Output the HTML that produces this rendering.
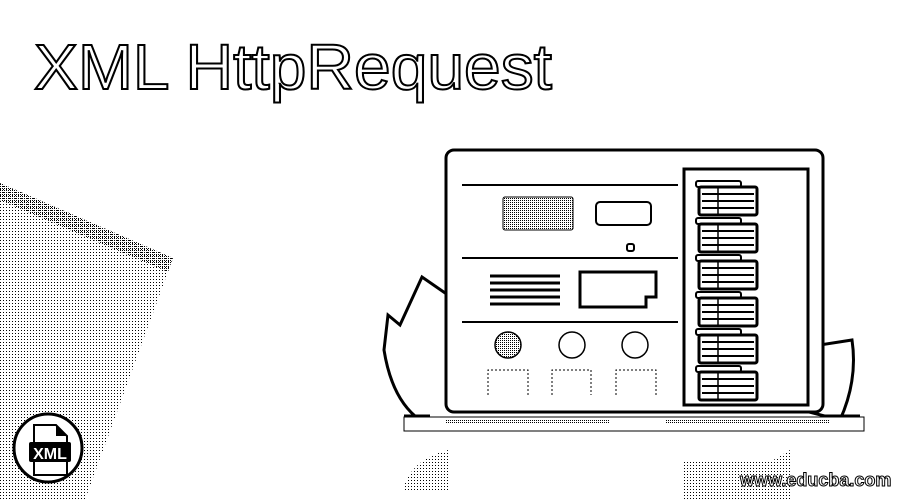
<!DOCTYPE html>
<html><head><style>
html,body{margin:0;padding:0;background:#fff;width:900px;height:500px;overflow:hidden}
svg{display:block}
</style></head><body>
<svg width="900" height="500" viewBox="0 0 900 500" xmlns="http://www.w3.org/2000/svg">
<defs>
<pattern id="dot" width="3" height="3" patternUnits="userSpaceOnUse"><rect width="1" height="1" fill="#000"/></pattern>
<pattern id="dot2" width="2" height="2" patternUnits="userSpaceOnUse"><rect width="1" height="1" fill="#000"/></pattern>
<g id="item">
<rect x="0" y="0" width="45" height="6" rx="2" fill="#fff" stroke="#000" stroke-width="2"/>
<rect x="3" y="6" width="58" height="28" rx="2" fill="#fff" stroke="#000" stroke-width="3"/>
<line x1="6" y1="13" x2="58" y2="13" stroke="#000" stroke-width="2"/>
<line x1="6" y1="20" x2="58" y2="20" stroke="#000" stroke-width="2"/>
<line x1="6" y1="27" x2="58" y2="27" stroke="#000" stroke-width="2"/>
<line x1="22" y1="6" x2="22" y2="34" stroke="#000" stroke-width="1.5"/>
</g>
</defs>
<rect width="900" height="500" fill="#fff"/>
<polygon points="0,183 173,258 85,500 0,500" fill="url(#dot)"/>
<polygon points="0,183 173,258 168,272 0,200" fill="url(#dot2)"/>
<text x="34" y="89" font-family="Liberation Sans, sans-serif" font-size="64" fill="#fff" stroke="#000" stroke-width="2" textLength="518" lengthAdjust="spacingAndGlyphs">XML HttpRequest</text>
<path d="M448,295 L422,277 L400,325 L388,315 L384,350 Q392,400 420,420 L470,420" fill="#fff" stroke="#000" stroke-width="3"/>
<path d="M808,305 L790,318 Q770,360 782,405 L840,420 Q858,380 852,340 L820,345 Z" fill="#fff" stroke="#000" stroke-width="3"/>
<rect x="446" y="150" width="377" height="262" rx="8" fill="#fff" stroke="#000" stroke-width="3"/>
<line x1="462" y1="185" x2="678" y2="185" stroke="#000" stroke-width="2"/>
<line x1="462" y1="258" x2="678" y2="258" stroke="#000" stroke-width="2"/>
<line x1="462" y1="322" x2="678" y2="322" stroke="#000" stroke-width="2"/>
<rect x="503" y="197" width="70" height="33" rx="2" fill="url(#dot2)" stroke="#000" stroke-width="1"/>
<rect x="596" y="202" width="55" height="23" rx="4" fill="#fff" stroke="#000" stroke-width="2"/>
<rect x="627" y="244" width="7" height="7" rx="2" fill="#fff" stroke="#000" stroke-width="2"/>
<g stroke="#000" stroke-width="3"><line x1="490" y1="276" x2="560" y2="276"/><line x1="490" y1="283" x2="560" y2="283"/><line x1="490" y1="290" x2="560" y2="290"/><line x1="490" y1="297" x2="560" y2="297"/><line x1="490" y1="304" x2="560" y2="304"/></g>
<path d="M580,272 L656,272 L656,297 L646,297 L646,307 L580,307 Z" fill="#fff" stroke="#000" stroke-width="3"/>
<circle cx="508" cy="345" r="13" fill="url(#dot2)" stroke="#000" stroke-width="1.5"/>
<circle cx="572" cy="345" r="13" fill="#fff" stroke="#000" stroke-width="1.5"/>
<circle cx="635" cy="345" r="13" fill="#fff" stroke="#000" stroke-width="1.5"/>
<g fill="none" stroke="#000" stroke-width="1" stroke-dasharray="2,2"><path d="M488,395 V370 H528 V395"/><path d="M552,395 V370 H591 V395"/><path d="M616,395 V370 H656 V395"/></g>
<rect x="684" y="169" width="124" height="236" fill="#fff" stroke="#000" stroke-width="3"/>
<use href="#item" x="696" y="181"/>
<use href="#item" x="696" y="218"/>
<use href="#item" x="696" y="255"/>
<use href="#item" x="696" y="292"/>
<use href="#item" x="696" y="329"/>
<use href="#item" x="696" y="366"/>
<rect x="404" y="417" width="460" height="14" fill="#fff" stroke="#000" stroke-width="1"/>
<rect x="445" y="419" width="165" height="4" fill="url(#dot2)"/>
<rect x="665" y="419" width="165" height="4" fill="url(#dot2)"/>
<line x1="404" y1="416" x2="430" y2="416" stroke="#000" stroke-width="3"/>
<line x1="825" y1="416" x2="860" y2="416" stroke="#000" stroke-width="3"/>
<path d="M403,490 Q410,460 448,450 L448,490 Z" fill="url(#dot)"/>
<path d="M683,462 L770,462 L790,450 L790,500 L683,500 Z" fill="url(#dot)"/>
<text x="740" y="486" font-family="Liberation Sans, sans-serif" font-weight="bold" font-size="18" fill="#fff" stroke="#000" stroke-width="1">www.educba.com</text>
<circle cx="48" cy="448" r="34" fill="#fff" stroke="#000" stroke-width="3"/>
<path d="M34,425 L56,425 L67,436 L67,475 L34,475 Z" fill="#fff" stroke="#000" stroke-width="2"/>
<path d="M56,425 L56,436 L67,436" fill="#000"/>
<rect x="29" y="442" width="42" height="20" rx="2" fill="#000"/>
<text x="50" y="459" font-family="Liberation Sans, sans-serif" font-weight="bold" font-size="16" fill="#fff" text-anchor="middle">XML</text>
</svg>
</body></html>
